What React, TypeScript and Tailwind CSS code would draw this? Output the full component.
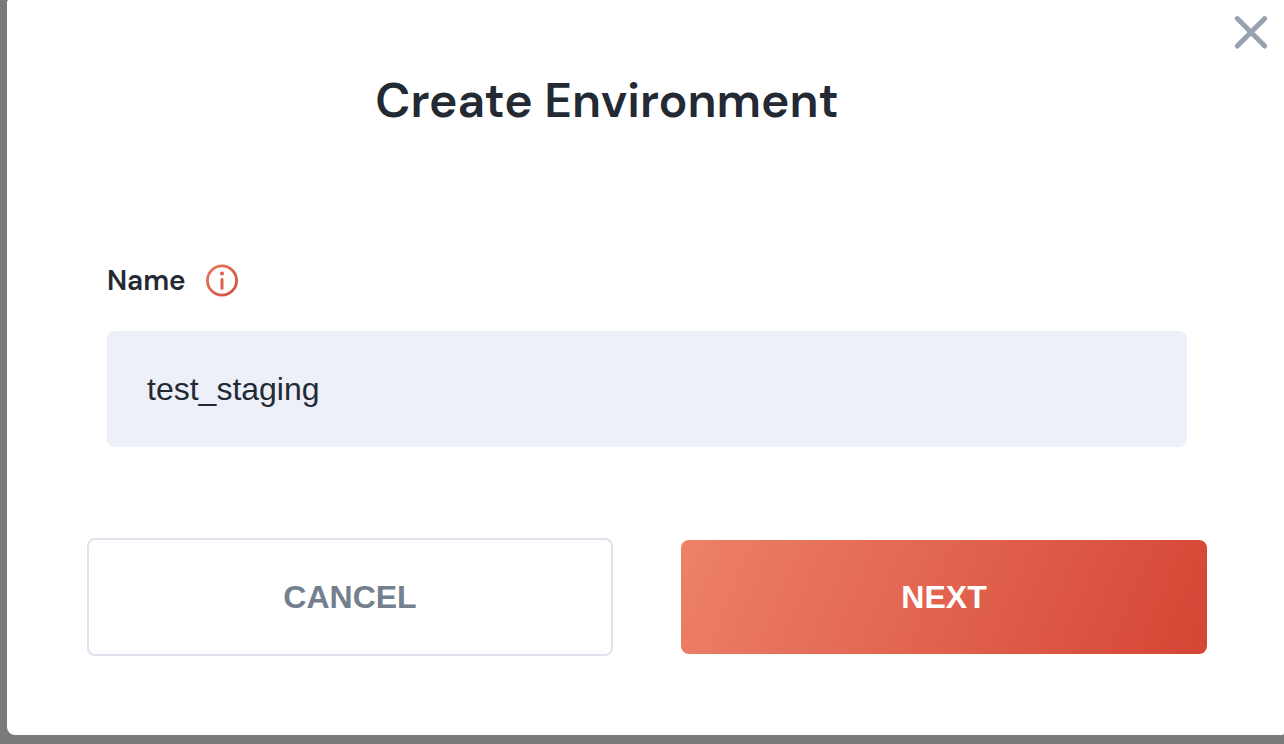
export default function App() {
  return (
    <div className="flex min-h-screen flex-col bg-[#7a7a7a] pb-[9px] pl-[7px] font-['Liberation_Sans',Arial,sans-serif] text-[#232a34]">
      <main role="dialog" aria-labelledby="title" className="flex grow flex-col rounded-tl-xs rounded-br-xs rounded-bl-lg bg-white">
        <div className="flex h-16 justify-end pt-3 pr-[13px]">
          <button type="button" aria-label="Close" className="h-10 w-10 text-[#97a1b0]">
            <svg viewBox="0 0 40 40" className="h-10 w-10" fill="none" stroke="currentColor" strokeWidth="5" strokeLinecap="round">
              <path d="M6.3 6.6 33.7 34M33.7 6.6 6.3 34" />
            </svg>
          </button>
        </div>
        <h1 id="title" className="mr-[77px] pt-[7px] text-center font-['DM_Sans','Inter',sans-serif] text-5xl leading-[60px] font-semibold">
          Create Environment
        </h1>
        <form className="flex flex-col pr-[77px] pl-20" onSubmit={(e) => e.preventDefault()}>
          <div className="flex flex-col px-5 pt-[130px]">
            <div className="flex items-center gap-5">
              <label htmlFor="name" className="font-['DM_Sans','Inter',sans-serif] text-[28px] leading-10 font-semibold">Name</label>
              <svg viewBox="0 0 32 32" className="h-8 w-8 overflow-visible" fill="none" strokeLinecap="round">
                <defs>
                  <linearGradient id="info" gradientUnits="userSpaceOnUse" x1="0" y1="0" x2="32" y2="32">
                    <stop stopColor="#e87962" />
                    <stop offset="1" stopColor="#d44b39" />
                  </linearGradient>
                </defs>
                <circle cx="16" cy="15.5" r="14.6" stroke="url(#info)" strokeWidth="2.8" />
                <path d="M16 14.6v8.6" stroke="#dc604c" strokeWidth="3" />
                <circle cx="16" cy="8.4" r="2" fill="#dc604c" />
              </svg>
            </div>
            <input id="name" defaultValue="test_staging" className="mt-[30px] h-[116px] w-full rounded-lg bg-[#edf0f8] px-10 text-[32px] outline-none" />
          </div>
          <div className="mt-[91px] grid grid-cols-2 items-center gap-[68px]">
            <button type="button" className="h-[118px] rounded-lg border-2 border-[#dfe3ed] text-[32px] font-bold text-[#75808f]">CANCEL</button>
            <button type="submit" className="h-[114px] rounded-lg bg-[linear-gradient(113deg,#ed8168,#d54534)] text-[32px] font-bold text-white">NEXT</button>
          </div>
        </form>
      </main>
    </div>
  );
}
